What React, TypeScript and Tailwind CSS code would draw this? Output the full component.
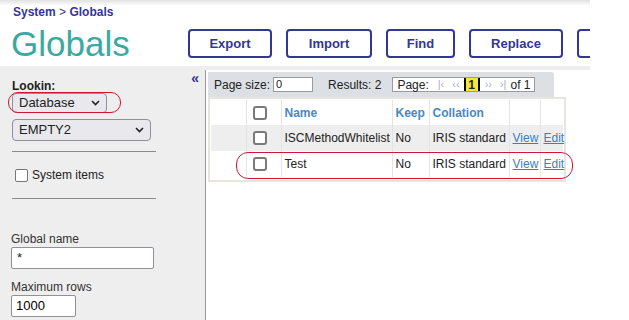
import React from "react";

const navy = "text-[#333695]";

function Chevron() {
  return (
    <svg width="9" height="6" viewBox="0 0 9 6" className="shrink-0">
      <path d="M1 1l3.5 3.5L8 1" fill="none" stroke="#222" strokeWidth="1.6" />
    </svg>
  );
}

function Box({ className = "" }: { className?: string }) {
  return <div className={`h-[14px] w-[14px] rounded-[3px] border-2 border-[#7a7a7a] bg-white ${className}`} />;
}

const buttons = [
  { label: "Export", w: "w-[84px]" },
  { label: "Import", w: "w-[86px]" },
  { label: "Find", w: "w-[69px]" },
  { label: "Replace", w: "w-[94px]" },
  { label: "", w: "w-[80px]" },
];

const rows = [
  { name: "ISCMethodWhitelist", keep: "No", coll: "IRIS standard", bg: "bg-[#eeeeee]" },
  { name: "Test", keep: "No", coll: "IRIS standard", bg: "bg-white" },
];

const cell = "border-l border-[#e4e4e4] pl-[3px] whitespace-nowrap";

export default function App() {
  return (
    <div className="relative h-[320px] w-[629px] overflow-hidden bg-white font-['Liberation_Sans',Arial,sans-serif] text-[#222]">
      <div className="w-[590px]">
        <div className="h-[6px] bg-gradient-to-b from-[#e2e2e2] to-white" />
        <div className={`h-[13px] pl-[13px] text-[12px] font-bold leading-[13px] ${navy}`}>
          System <span className="font-normal">&gt;</span> Globals
        </div>

        <div className="flex h-[47px] items-start overflow-hidden">
          <div className="mt-[7px] w-[188px] shrink-0 pl-[11px] text-[35px] leading-[35px] text-[#3ba9a3]">
            Globals
          </div>
          <div className="mt-[10px] flex gap-[14px]">
            {buttons.map((b, i) => (
              <div
                key={i}
                className={`${b.w} flex h-[29px] shrink-0 items-center justify-center rounded-[4px] border-2 border-[#333695] bg-white text-[13px] font-bold ${navy}`}
              >
                {b.label}
              </div>
            ))}
          </div>
        </div>

        <div className="h-[4px] bg-[#eeeeee]" />

        <div className="flex h-[250px]">
          {/* left panel */}
          <div className="w-[206px] shrink-0 border-r border-[#9a9a9a] bg-[#eeeeee]">
            <div className="flex items-start justify-between pl-[12px] pr-[6px] pt-[1px]">
              <span className="mt-[8px] text-[12px] font-bold leading-[14px]">Lookin:</span>
              <span className={`text-[14px] font-bold leading-[14px] ${navy}`}>«</span>
            </div>
            <div className="ml-[12px] flex h-[20px] w-[95px] items-center justify-between rounded-[4px] border border-[#8f8f9d] bg-[#e9e9ed] px-[6px] text-[13px]">
              Database <Chevron />
            </div>
            <div className="ml-[12px] mt-[6px] flex h-[22px] w-[139px] items-center justify-between rounded-[4px] border border-[#8f8f9d] bg-[#e9e9ed] px-[6px] text-[13px]">
              EMPTY2 <Chevron />
            </div>
            <div className="ml-[12px] mt-[10px] h-px w-[144px] bg-[#8a8a8a]" />
            <div className="ml-[15px] mt-[17px] flex items-center gap-[4px] text-[12px] leading-[13px]">
              <div className="h-[13px] w-[13px] rounded-[2px] border border-[#767676] bg-white" />
              System items
            </div>
            <div className="ml-[12px] mt-[16px] h-px w-[144px] bg-[#8a8a8a]" />
            <div className="ml-[11px] mt-[33px] text-[12px] leading-[14px] text-[#333]">Global name</div>
            <div className="ml-[11px] mt-[1px] flex h-[22px] w-[143px] items-center rounded-[2px] border border-[#8f8f9d] bg-white pl-[5px] text-[13px]">
              *
            </div>
            <div className="ml-[11px] mt-[11px] text-[12px] leading-[14px] text-[#333]">Maximum rows</div>
            <div className="ml-[11px] mt-[1px] flex h-[22px] w-[65px] items-center rounded-[2px] border border-[#8f8f9d] bg-white pl-[4px] text-[13px] text-black">
              1000
            </div>
          </div>

          {/* right content */}
          <div className="flex-1 pl-[2px] pt-[2px]">
            <div className="flex h-[25px] w-[346px] items-center rounded-tr-[3px] bg-[#dcdfe3] pl-[6px] text-[12px] text-[#222]">
              <span>Page size:</span>
              <div className="ml-[3px] flex h-[15px] w-[40px] items-center border border-[#9a9a9a] bg-white pl-[2px] text-[11px]">0</div>
              <span className="ml-[15px]">Results: 2</span>
              <div className="ml-[11px] flex h-[15px] w-[143px] items-center border border-[#9a9a9a] bg-white pl-[4px]">
                <span>Page:</span>
                <span className="ml-[9px] text-[11px] text-[#a8b0c0]">|‹</span>
                <span className="ml-[8px] text-[11px] text-[#a8b0c0]">‹‹</span>
                <span className="ml-[4px] flex h-full w-[16px] items-center justify-center border-x-2 border-black bg-[#f7e63a] font-bold">1</span>
                <span className="ml-[5px] text-[11px] text-[#a8b0c0]">››</span>
                <span className="ml-[8px] text-[11px] text-[#a8b0c0]">›|</span>
                <span className="ml-[4px]">of 1</span>
              </div>
            </div>

            <div className="w-[358px] border-2 border-[#e6e6dd] p-[1px] pb-[3px]">
              <table className="w-[352px] table-fixed border-collapse text-[12px]">
                <colgroup>
                  <col className="w-[35px]" />
                  <col className="w-[35px]" />
                  <col className="w-[111px]" />
                  <col className="w-[37px]" />
                  <col className="w-[80px]" />
                  <col className="w-[31px]" />
                  <col className="w-[23px]" />
                </colgroup>
                <thead>
                  <tr className="h-[25px] text-left font-bold text-[#4689c8]">
                    <th />
                    <th className="border-l border-[#e4e4e4]">
                      <Box className="ml-[6px]" />
                    </th>
                    <th className={cell}>Name</th>
                    <th className={cell}>Keep</th>
                    <th className={cell}>Collation</th>
                    <th className={cell} />
                    <th className={cell} />
                  </tr>
                </thead>
                <tbody>
                  {rows.map((r) => (
                    <tr key={r.name} className={`h-[26px] ${r.bg}`}>
                      <td />
                      <td className="border-l border-[#e4e4e4]">
                        <Box className="ml-[6px]" />
                      </td>
                      <td className={cell}>{r.name}</td>
                      <td className={cell}>{r.keep}</td>
                      <td className={cell}>{r.coll}</td>
                      <td className={`${cell} text-[#3a7fc0] underline`}>View</td>
                      <td className={`${cell} text-[#3a7fc0] underline`}>Edit</td>
                    </tr>
                  ))}
                </tbody>
              </table>
            </div>
          </div>
        </div>
      </div>

      {/* red annotation marks */}
      <div className="pointer-events-none absolute left-[8px] top-[92px] h-[21px] w-[113px] rounded-[10px] border-[1.5px] border-[#d4133b]" />
      <div className="pointer-events-none absolute left-[236px] top-[152px] h-[27px] w-[337px] rounded-[12px] border-[1.5px] border-[#d4133b]" />
    </div>
  );
}
